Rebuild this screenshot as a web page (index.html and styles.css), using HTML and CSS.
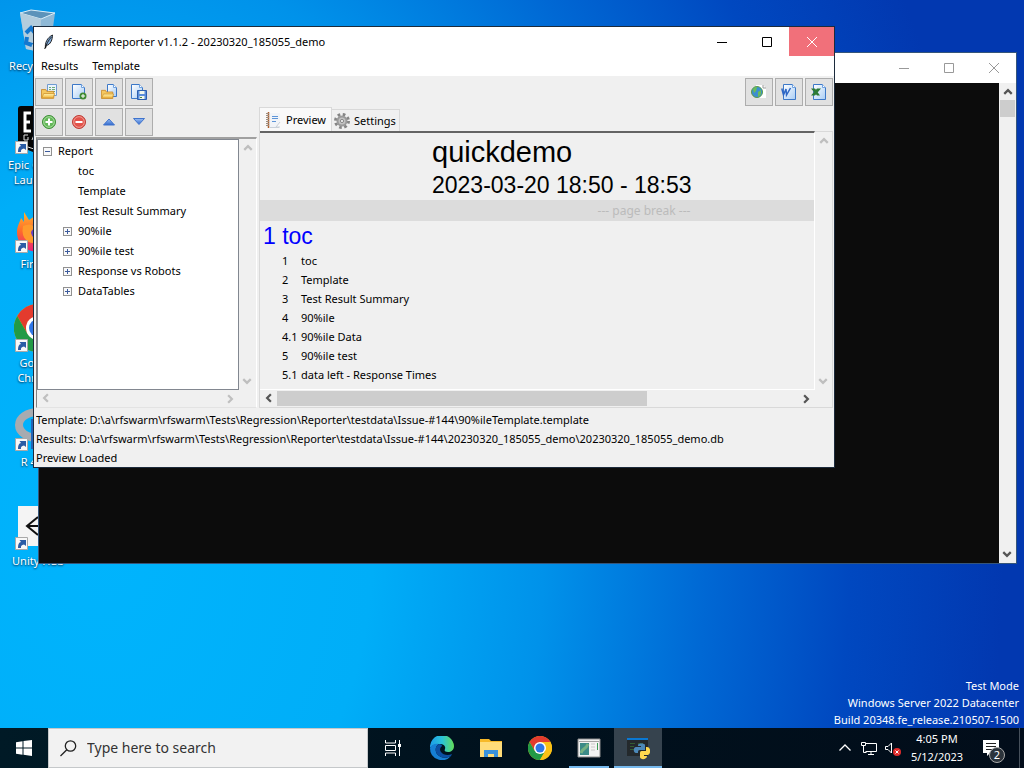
FILE: index.html
```html
<!DOCTYPE html>
<html lang="en">
<head>
<meta charset="utf-8">
<title>rfswarm Reporter</title>
<link rel="stylesheet" href="styles.css">
</head>
<body>
<svg class="defs" aria-hidden="true">
  <defs>
    <linearGradient id="gPage" x1="0" y1="0" x2="1" y2="1"><stop offset="0" stop-color="#fff"/><stop offset="1" stop-color="#a9cdf5"/></linearGradient>
    <linearGradient id="gFolder" x1="0" y1="0" x2="0" y2="1"><stop offset="0" stop-color="#fff3b0"/><stop offset="1" stop-color="#f2b63c"/></linearGradient>
    <linearGradient id="gBlue" x1="0" y1="0" x2="0" y2="1"><stop offset="0" stop-color="#9cc0f5"/><stop offset="1" stop-color="#2f67cc"/></linearGradient>
    <linearGradient id="gEdge" x1="0" y1="0" x2="1" y2="0"><stop offset="0" stop-color="#1c9be8"/><stop offset=".5" stop-color="#2ac3d8"/><stop offset="1" stop-color="#63dd58"/></linearGradient>
    <linearGradient id="gFox" x1="0" y1="0" x2="0" y2="1"><stop offset="0" stop-color="#ffbd2e"/><stop offset=".5" stop-color="#ff6b2b"/><stop offset="1" stop-color="#e8207a"/></linearGradient>
    <symbol id="page" viewBox="0 0 16 16"><path d="M2.500.5h8l3 3v12h-11z" fill="url(#gPage)" stroke="#3c78c8"/><path d="M10.500.5v3h3" fill="#fff" stroke="#6fa1de"/></symbol>
    <symbol id="folder" viewBox="0 0 16 12"><path d="M.5 11.500v-10h5l1 2h8v8z" fill="#f5c860" stroke="#c9892a"/><path d="M1 11l2-5h12.500l-1.500 5z" fill="url(#gFolder)" stroke="#d39a35"/></symbol>
    <symbol id="chrome" viewBox="0 0 48 48"><circle cx="24" cy="24" r="24" fill="#fbc116"/><path d="M3.200 12A24 24 0 0 1 44.800 12H24l-10.400 18z" fill="#e33b2e"/><path d="M3.200 12A24 24 0 0 0 24 48l10.400-18H13.600z" fill="#229a46"/><path d="M44.800 12A24 24 0 0 1 24 48l10.400-18L24 12z" fill="#fbc116"/><circle cx="24" cy="24" r="12" fill="#fff"/><circle cx="24" cy="24" r="9" fill="#2f76e8"/></symbol>
    <symbol id="shortcut" viewBox="0 0 13 13"><path d="M.5.5h12v12H.5z" fill="#f8f8f8" stroke="#a9a9a9"/><path d="M3 11c0-4 1-5.500 3-6L4.500 3H11v6L9 7.500C6.500 8 5.500 9 6 11z" fill="#2b5ca5"/></symbol>
    <symbol id="min" viewBox="0 0 10 10"><path d="M0 5.500h10" stroke="currentColor"/></symbol>
    <symbol id="max" viewBox="0 0 10 10"><path d="M.5.5h9v9h-9z" fill="none" stroke="currentColor"/></symbol>
    <symbol id="close" viewBox="0 0 10 10"><path d="M0 0l10 10M10 0L0 10" stroke="currentColor"/></symbol>
    <symbol id="chev" viewBox="0 0 8 8"><path d="M1 5.500l3-3 3 3" fill="none" stroke="currentColor" stroke-width="1.800"/></symbol>
  </defs>
</svg>
<main class="desktop">
  <nav class="shortcuts" aria-label="Desktop">
    <a href="#" class="shortcut"><span class="pic"><svg viewBox="0 0 48 48"><path d="M6 6l11-3 24 3-5 36-8 3-16-3z" fill="#8fb9d6"/><path d="M6 6l11-3 24 3-14 6z" fill="#5c93ba" stroke="#d9edf8"/><path d="M6 6l21 6-1 33-14-3z" fill="#b3cddd"/><path d="M12 26l5-5 4 5M24 27l1 8-6 3M18 38l-6-2 1-6" fill="none" stroke="#1478cf" stroke-width="4"/></svg></span><span class="label">Recycle Bin</span></a>
    <a href="#" class="shortcut"><span class="pic"><svg viewBox="0 0 48 48"><path d="M7 0h34q3 0 3 3v37L24 48 4 40V3q0-3 3-3z" fill="#050505"/><g fill="none" stroke="#fff" stroke-width="3"><path d="M17 7h-6v18h6M11 16h5M21 26V7h5v9h-5"/></g><path d="M14 29h-4v5h4v-3M18 34l2-5 2 5M11 40l12 4 12-4" fill="none" stroke="#ddd"/></svg><svg class="arrow"><use href="#shortcut"/></svg></span><span class="label">Epic Games Launcher</span></a>
    <a href="#" class="shortcut"><span class="pic"><svg viewBox="0 0 48 48"><path d="M10 7l5 8 6-4 3-6 8 9c8 3 14 9 13 18-1 9-10 15-20 15C11 47 3 38 3 27c0-6 3-10 4-14l3 4z" fill="url(#gFox)"/><circle cx="26" cy="28" r="11" fill="#6c3fc4"/><path d="M9 21q8-4 14 2-6 1-6 5 2 8 11 7-7 6-15 1-6-5-4-15z" fill="#ff9a2c"/></svg><svg class="arrow"><use href="#shortcut"/></svg></span><span class="label">Firefox</span></a>
    <a href="#" class="shortcut"><span class="pic"><svg><use href="#chrome"/></svg><svg class="arrow"><use href="#shortcut"/></svg></span><span class="label">Google Chrome</span></a>
    <a href="#" class="shortcut"><span class="pic"><svg viewBox="0 0 48 48"><ellipse cx="24" cy="22" rx="19" ry="13" fill="none" stroke="#a7abb0" stroke-width="8"/><path d="M20 16h18v10H20M20 16v30M30 26l10 20" fill="none" stroke="#2265b8" stroke-width="6"/></svg><svg class="arrow"><use href="#shortcut"/></svg></span><span class="label">R 4.3.0</span></a>
    <a href="#" class="shortcut"><span class="pic"><svg viewBox="0 0 48 48"><path d="M4 4h40v40H4z" fill="#f4f4f4"/><path d="M24 15L13 24l11 9M13 24h14M24 15l11 9-11 9" fill="none" stroke="#111" stroke-width="2"/></svg><svg class="arrow"><use href="#shortcut"/></svg></span><span class="label">Unity Hub</span></a>
  </nav>

  <div class="watermark">Test Mode<br>Windows Server 2022 Datacenter<br>Build 20348.fe_release.210507-1500</div>

  <section class="window console" aria-label="Console">
    <header class="titlebar">
      <div class="controls"><button aria-label="Minimize"><svg><use href="#min"/></svg></button><button aria-label="Maximize"><svg><use href="#max"/></svg></button><button aria-label="Close"><svg><use href="#close"/></svg></button></div>
    </header>
    <div class="console-body">
      <div class="terminal"></div>
      <div class="scroll vertical"><button aria-label="Scroll up"><svg><use href="#chev"/></svg></button><span class="thumb"></span><button class="down" aria-label="Scroll down"><svg><use href="#chev"/></svg></button></div>
    </div>
  </section>

  <section class="window reporter" aria-label="rfswarm Reporter">
    <header class="titlebar">
      <svg class="feather" viewBox="0 0 16 16"><path d="M4 15C3 9 6 3 12 0c0 5-2 11-7 12z" fill="#7fa9d8" stroke="#111"/><path d="M3 16C5 11 7 6 11 2" stroke="#111" fill="none"/></svg>
      <h1 class="title">rfswarm Reporter v1.1.2 - 20230320_185055_demo</h1>
      <div class="controls"><button aria-label="Minimize"><svg><use href="#min"/></svg></button><button aria-label="Maximize"><svg><use href="#max"/></svg></button><button class="hot" aria-label="Close"><svg><use href="#close"/></svg></button></div>
    </header>
    <nav class="menubar"><button>Results</button><button>Template</button></nav>
    <div class="toolbar">
      <button class="tool" aria-label="Open results"><svg viewBox="0 0 16 16"><path d="M6.500.5h9v11h-9z" fill="#eaf3fd" stroke="#6e9bd1"/><path d="M8 3.500h2M11 3.500h3M8 5.500h2M11 5.500h3M8 7.500h6" stroke="#6fae78"/><use href="#folder" y="4" width="14" height="11"/></svg></button>
      <button class="tool" aria-label="New template"><svg viewBox="0 0 16 16"><path d="M1.500.5h9l3 3v11h-12z" fill="url(#gPage)" stroke="#3c78c8"/><path d="M10.500.5v3h3" fill="#fff" stroke="#6fa1de"/><circle cx="12" cy="12" r="3.500" fill="#3f8a32"/><path d="M12 10v4M10 12h4" stroke="#fff"/></svg></button>
      <button class="tool" aria-label="Open template"><svg viewBox="0 0 16 16"><path d="M6.500.5h6l3 3v9h-9z" fill="url(#gPage)" stroke="#3c78c8"/><path d="M12.500.5v3h3" fill="#fff" stroke="#6fa1de"/><use href="#folder" y="5" width="13" height="10"/></svg></button>
      <button class="tool" aria-label="Save template"><svg viewBox="0 0 16 16"><path d="M.5.5h8l3 3v11H.5z" fill="url(#gPage)" stroke="#3c78c8"/><path d="M8.500.5v3h3" fill="#fff" stroke="#6fa1de"/><path d="M6.500 6.500h9v9h-9z" fill="#5b8edb" stroke="#2c5fae"/><path d="M8.500 7h5v3h-5zM8.500 12h5v3h-5z" fill="#f2f8ec"/><path d="M9 13.500h2" stroke="#4c8a44"/></svg></button>
      <span class="spring"></span>
      <button class="tool" aria-label="Export HTML"><svg viewBox="0 0 16 16"><path d="M5 1h7l3 3v10H5z" fill="#fff"/><path d="M12 1v3h3" fill="none" stroke="#999"/><circle cx="6" cy="8" r="5.500" fill="#3d8fd1" stroke="#5a9a48"/><path d="M2 5q3-3 4-2l-1 4-2 2zM7 8l3-2v4l-3 3z" fill="#6cbf56"/></svg></button>
      <button class="tool" aria-label="Export Word"><svg viewBox="0 0 16 16"><path d="M2.500.5h9l3 3v12h-12z" fill="url(#gPage)" stroke="#3c78c8"/><path d="M11.500.5v3h3" fill="#fff" stroke="#6fa1de"/><path d="M.8 4.500L2.500 11l2.500-6 .5 6L9.500 4" fill="none" stroke="#2f67c5" stroke-width="1.500"/></svg></button>
      <button class="tool" aria-label="Export Excel"><svg viewBox="0 0 16 16"><path d="M2.500.5h9l3 3v12h-12z" fill="url(#gPage)" stroke="#3c78c8"/><path d="M11.500.5v3h3" fill="#fff" stroke="#6fa1de"/><path d="M0 4.500h4l5 7H6zM6 4.500h4l-6 7H0z" fill="#2c7a35"/></svg></button>
    </div>
    <div class="workspace">
      <div class="side">
        <div class="toolbar">
          <button class="tool" aria-label="Add section"><svg viewBox="0 0 16 16"><circle cx="8" cy="8" r="6.500" fill="#65b85a" stroke="#3d8d36"/><circle cx="8" cy="8" r="5.300" fill="none" stroke="#a6dd9d"/><path d="M8 4.500v7M4.500 8h7" stroke="#fff" stroke-width="2"/></svg></button>
          <button class="tool" aria-label="Remove section"><svg viewBox="0 0 16 16"><circle cx="8" cy="8" r="6.500" fill="#e3534b" stroke="#bd3c35"/><circle cx="8" cy="8" r="5.300" fill="none" stroke="#f19d94"/><path d="M4.500 8h7" stroke="#fff" stroke-width="2"/></svg></button>
          <button class="tool" aria-label="Move up"><svg viewBox="0 0 16 16"><path d="M8 5l5.500 6h-11z" fill="url(#gBlue)" stroke="#3f73cc"/></svg></button>
          <button class="tool" aria-label="Move down"><svg viewBox="0 0 16 16"><path d="M8 10.500L2.500 4.500h11z" fill="url(#gBlue)" stroke="#3f73cc"/></svg></button>
        </div>
        <div class="treeframe">
          <ul class="tree">
            <li><button class="toggle open" aria-label="Collapse"></button>Report</li>
            <li class="leaf">toc</li>
            <li class="leaf">Template</li>
            <li class="leaf">Test Result Summary</li>
            <li class="child"><button class="toggle" aria-label="Expand"></button>90%ile</li>
            <li class="child"><button class="toggle" aria-label="Expand"></button>90%ile test</li>
            <li class="child"><button class="toggle" aria-label="Expand"></button>Response vs Robots</li>
            <li class="child"><button class="toggle" aria-label="Expand"></button>DataTables</li>
          </ul>
          <div class="scroll vertical off"><button aria-label="Scroll up"><svg><use href="#chev"/></svg></button><button class="down" aria-label="Scroll down"><svg><use href="#chev"/></svg></button></div>
          <div class="scroll horizontal off"><button class="left" aria-label="Scroll left"><svg><use href="#chev"/></svg></button><button class="right" aria-label="Scroll right"><svg><use href="#chev"/></svg></button></div>
        </div>
      </div>
      <div class="notebook">
        <div class="tabs" role="tablist">
          <button class="tab active" role="tab" aria-selected="true"><svg viewBox="0 0 16 16"><path d="M3 1h11v9l-4 5H3z" fill="#f1f4f8"/><path d="M14 10l-4 5h4M4 15.500h9" fill="none" stroke="#c9d0d8"/><path d="M6 4.500h6M6 6.500h6M6 9.500h4" stroke="#5d95d8"/><path d="M2.500 0v16" stroke="#b1602c" stroke-width="1.500"/><path d="M0 1.500h3M0 3.500h3M0 5.500h3M0 7.500h3M0 9.500h3M0 11.500h3M0 13.500h3" stroke="#9d8d80"/></svg>Preview</button>
          <button class="tab" role="tab" aria-selected="false"><svg viewBox="0 0 16 16"><circle cx="8" cy="8" r="6.500" fill="none" stroke="#858585" stroke-width="3" stroke-dasharray="2.600 2.500"/><circle cx="8" cy="8" r="4.500" fill="#c2c2c2" stroke="#9a9a9a" stroke-width="2"/><circle cx="8" cy="8" r="1.600" fill="#eee" stroke="#888"/></svg>Settings</button>
        </div>
        <div class="pane">
          <div class="viewport">
            <article class="report">
              <h2 class="name">quickdemo</h2>
              <p class="when">2023-03-20 18:50 - 18:53</p>
              <p class="break">--- page break ---</p>
              <h3 class="heading">1 toc</h3>
              <table class="toc">
                <tr><td>1</td><td>toc</td></tr>
                <tr><td>2</td><td>Template</td></tr>
                <tr><td>3</td><td>Test Result Summary</td></tr>
                <tr><td>4</td><td>90%ile</td></tr>
                <tr><td>4.1</td><td>90%ile Data</td></tr>
                <tr><td>5</td><td>90%ile test</td></tr>
                <tr><td>5.1</td><td>data left - Response Times</td></tr>
                <tr><td>5.2</td><td>data right - 90%ile</td></tr>
              </table>
            </article>
          </div>
          <div class="scroll vertical off"><button aria-label="Scroll up"><svg><use href="#chev"/></svg></button><button class="down" aria-label="Scroll down"><svg><use href="#chev"/></svg></button></div>
          <div class="scroll horizontal"><button class="left" aria-label="Scroll left"><svg><use href="#chev"/></svg></button><span class="track"><span class="thumb"></span></span><button class="right" aria-label="Scroll right"><svg><use href="#chev"/></svg></button></div>
        </div>
      </div>
    </div>
    <footer class="status">
      <p>Template: D:\a\rfswarm\rfswarm\Tests\Regression\Reporter\testdata\Issue-#144\90%ileTemplate.template</p>
      <p>Results: D:\a\rfswarm\rfswarm\Tests\Regression\Reporter\testdata\Issue-#144\20230320_185055_demo\20230320_185055_demo.db</p>
      <p>Preview Loaded</p>
    </footer>
  </section>
</main>

<footer class="taskbar">
  <button class="start" aria-label="Start"><svg viewBox="0 0 16 16"><path d="M0 2.200L6.500 1.300v6.200H0zM7.500 1.100L16 0v7.500H7.500zM0 8.500h6.500v6.200L0 13.800zM7.500 8.500H16V16l-8.500-1.200z" fill="#fff"/></svg></button>
  <label class="search"><svg viewBox="0 0 17 17"><circle cx="10.500" cy="6" r="5.200" fill="none" stroke="#222" stroke-width="1.300"/><path d="M6.800 9.700L.5 16" stroke="#222" stroke-width="1.300"/></svg><input type="text" placeholder="Type here to search" aria-label="Search"></label>
  <div class="apps">
    <button aria-label="Task View"><svg class="small" viewBox="0 0 18 18"><path d="M1.500 1v3h10V1M1.500 17v-3h10v3M1.500 6.500h10v5h-10zM15.500 1v16" fill="none" stroke="#fff"/><path d="M14 5h3v3h-3z" fill="#fff"/></svg></button>
    <button aria-label="Edge"><svg viewBox="0 0 24 24"><path d="M0 12A12 12 0 0 1 24 10c0 4-3 6-6 6s-4-1-3-3c1-3-2-5-5-5C5 8 1 10 0 12z" fill="url(#gEdge)"/><path d="M0 12c1-3 5-5 9-4-4 2-4 7-2 10 3 4 9 5 14 2A12 12 0 0 1 0 12z" fill="#167fd4"/><path d="M9 8c-4 2-4 7-2 10 3 4 9 5 14 2l1-2c-4 2-9 1-11-2-2-3 0-5 1-6 0-1-1-2-3-2z" fill="#0b4fa3"/></svg></button>
    <button aria-label="File Explorer"><svg viewBox="0 0 24 24"><path d="M1 3h9l2 2h11v16H1z" fill="#f7b928"/><path d="M1 6h22v15H1z" fill="#ffdc79"/><path d="M5 21v-7h14v7h-4v-3H9v3z" fill="#3a92dc"/></svg></button>
    <button aria-label="Chrome"><svg><use href="#chrome"/></svg></button>
    <button class="running" aria-label="Console"><svg viewBox="0 0 24 24"><path d="M1 3h22v18H1z" fill="#f3f3f3" stroke="#8d8d8d"/><path d="M2 5.500h20" stroke="#a5a5a5"/><path d="M3 7h9v12H3z" fill="#3c8b88"/><path d="M4 17c2-6 4-2 7-9" fill="none" stroke="#75b183" stroke-width="3"/><path d="M14 8h4M14 11h4M14 14h4" stroke="#c9c9c9"/><path d="M20.500 7v7" stroke="#3c9c58"/></svg></button>
    <button class="running current" aria-label="Python"><svg viewBox="0 0 24 24"><path d="M1 2h21v18H1z" fill="#24292c"/><path d="M1 2h21v2H1z" fill="#0a78d3"/><path d="M4 7.500h5M4 10.500h4M4 13.500h4M12 7.500h5" stroke="#345d32"/><path d="M12 9c0-2 7-2 7 0v5h-5c-2 0-2 1-2 3h-2c-3 0-3-6 0-6h5v-1h-3z" fill="#4c88b8"/><path d="M14 21v-4c0-2 1-2 3-2h3v-4h1c4 0 4 7 1 8h-4v1h3c0 4-7 4-7 1z" fill="#ffd94f"/></svg></button>
  </div>
  <div class="tray">
    <button aria-label="Show hidden icons"><svg viewBox="0 0 16 16"><path d="M2.500 10.500L8 5l5.500 5.500" fill="none" stroke="#fff" stroke-width="1.300"/></svg></button>
    <button aria-label="Network"><svg viewBox="0 0 16 16"><path d="M4.500 3.500h11v8H4.500M10 12v3M7 14.500h6M.5 2.500h4v3h-4zM2.500 6v6.500h3" fill="none" stroke="#fff"/></svg></button>
    <button aria-label="Volume muted"><svg viewBox="0 0 16 16"><path d="M.5 6.500H3L6.500 3v10L3 9.500H.5z" fill="none" stroke="#fff"/><circle cx="12" cy="12" r="4" fill="#e02b2b"/><path d="M10.500 10.500l3 3M13.500 10.500l-3 3" stroke="#fff"/></svg></button>
    <time class="clock">4:05 PM<br>5/12/2023</time>
    <button class="notes" aria-label="Notifications"><svg viewBox="0 0 16 16"><path d="M0 0h16v13H7l-3 3v-3H0z" fill="#fff"/><path d="M3 3.500h10M3 6.500h10M3 9.500h6" stroke="#222"/></svg><span class="badge">2</span></button>
  </div>
</footer>
</body>
</html>
```
FILE: styles.css
```css
* { box-sizing: border-box; }
body {
  margin: 0;
  height: 100vh;
  display: flex;
  flex-direction: column;
  overflow: hidden;
  font: 11px/16px "Noto Sans", "Open Sans", sans-serif;
  color: #000;
}
h1, h2, h3, p, ul { margin: 0; padding: 0; font-weight: 400; }
button { margin: 0; padding: 0; border: 0; background: none; font: inherit; color: inherit; display: flex; align-items: center; justify-content: center; }
a { color: inherit; text-decoration: none; }
.defs { position: absolute; width: 0; height: 0; }

.desktop {
  flex: 1;
  min-height: 0;
  position: relative;
  overflow: hidden;
  background: radial-gradient(ellipse 88% 165% at 10% 75%, #00b4fd 0%, #00aef8 30%, #0092ea 49%, #0068d4 67%, #0048c0 83%, #0238b0 100%);
}
.shortcuts { width: 76px; padding-top: 7px; display: flex; flex-direction: column; }
.shortcut { height: 99px; display: flex; flex-direction: column; align-items: center; gap: 3px; color: #fff; text-align: center; line-height: 15px; text-shadow: 0 1px 2px #024; }
.pic { position: relative; width: 48px; height: 48px; flex: none; }
.pic svg { width: 48px; height: 48px; display: block; }
.pic .arrow { position: absolute; left: 1px; bottom: 0; width: 13px; height: 13px; }
.watermark { position: absolute; right: 5px; bottom: 0; color: #fff; text-align: right; line-height: 17px; }

.window { position: absolute; display: flex; flex-direction: column; border: 1px solid #1c2b3c; }
.console { left: 38px; right: 7px; top: 52px; bottom: 164px; border-color: #35557a; }
.reporter { left: 33px; right: 189px; top: 26px; bottom: 260px; background: #f0f0f0; }
.titlebar { display: flex; align-items: center; background: #fff; height: 29px; flex: none; }
.console .titlebar { height: 30px; }
.feather { width: 14px; height: 16px; margin: 0 7px 0 8px; }
.title { font-size: 11px; flex: 1; }
.controls { display: flex; height: 100%; margin-left: auto; }
.controls button { width: 45px; }
.controls svg { width: 10px; height: 10px; }
.hot { background: #f1707a; color: #fff; }
.console .controls { color: #999; }
.console-body { flex: 1; display: flex; min-height: 0; }
.terminal { flex: 1; background: #0c0c0c; }

.scroll { background: #f0f0f0; display: flex; color: #555; flex: none; }
.scroll button { width: 17px; height: 17px; flex: none; }
.scroll svg { width: 10px; height: 10px; }
.vertical { width: 17px; flex-direction: column; }
.vertical .thumb { height: 17px; margin: 0 1px; background: #cdcdcd; }
.down { margin-top: auto; transform: rotate(180deg); }
.left { transform: rotate(-90deg); }
.right { transform: rotate(90deg); margin-left: auto; }
.off { color: #bfbfbf; }

.menubar { display: flex; gap: 14px; padding: 0 7px; height: 20px; background: #fff; flex: none; }
.toolbar { display: flex; gap: 2px; padding: 2px 1px 0; flex: none; height: 30px; }
.reporter > .toolbar { height: 31px; }
.spring { flex: 1; }
.tool { width: 28px; height: 28px; border: 1px solid #adadad; background: #e1e1e1; }
.tool svg { width: 16px; height: 16px; }

.workspace { flex: 1; display: flex; gap: 2px; min-height: 0; padding: 0 1px 0 2px; }
.side { width: 221px; display: flex; flex-direction: column; }
.side .toolbar { padding: 1px 0 0; margin-left: -1px; }
.treeframe {
  flex: 1; min-height: 0;
  display: grid; grid-template: 1fr 17px / 1fr 17px;
  border: solid; border-width: 2px 1px 1px; border-color: #a0a0a0 #fff #e3e3e3 #828282;
}
.tree { list-style: none; background: #fff; border: 1px solid #828790; padding: 1px 5px; line-height: 20px; overflow: hidden; }
.tree li { display: flex; align-items: center; gap: 6px; height: 20px; }
.tree .child { padding-left: 20px; }
.tree .leaf { padding-left: 35px; }
.toggle { width: 9px; height: 9px; border: 1px solid #919191; background: linear-gradient(#3c5a9c, #3c5a9c) center / 5px 1px no-repeat, linear-gradient(#3c5a9c, #3c5a9c) center / 1px 5px no-repeat, #f8f8f8; flex: none; }
.toggle.open { background: linear-gradient(#3c5a9c, #3c5a9c) center / 5px 1px no-repeat, #f8f8f8; }

.notebook { flex: 1; min-width: 0; display: flex; flex-direction: column; }
.tabs { display: flex; align-items: flex-end; height: 24px; flex: none; }
.tab { height: 22px; padding: 0 3px 0 2px; gap: 4px; border: 1px solid #d9d9d9; border-width: 1px 1px 0 0; }
.tab.active { height: 24px; padding: 0 5px 0 6px; background: #f9f9f9; border-left-width: 1px; }
.tab svg { width: 16px; height: 16px; }
.pane { flex: 1; min-height: 0; display: grid; grid-template: minmax(0, 1fr) 17px / minmax(0, 1fr) 17px; border: 1px solid #d9d9d9; border-top: 0; }
.viewport { overflow: hidden; border-top: 2px solid #646464; border-bottom: 1px solid #fff; border-right: 1px solid #fff; }
.pane .vertical { border-top: 1px solid #d9d9d9; }
.track { flex: 1; }
.track .thumb { display: block; width: 71%; height: 15px; margin-top: 1px; background: #cdcdcd; }
.report { width: 768px; }
.name, .when, .heading { font-family: "Liberation Sans", Arial, sans-serif; }
.name { font-size: 29px; line-height: 38px; padding-left: 172px; }
.when { font-size: 23px; line-height: 29px; padding-left: 172px; }
.break { background: #dcdcdc; color: #bbb; text-align: center; font-size: 12px; line-height: 21px; }
.heading { font-size: 23px; line-height: 30px; padding-left: 3px; color: #00f; }
.toc { border-collapse: collapse; margin-left: 22px; }
.toc td { padding: 0; height: 19px; line-height: 19px; }
.toc td:first-child { width: 19px; }
.status { padding: 2px 2px 0; line-height: 19px; flex: none; }
.status p { white-space: nowrap; overflow: hidden; }

.taskbar { height: 40px; flex: none; display: flex; color: #fff; background: linear-gradient(90deg, #001a26, #00111d 50%, #020d1a); }
.start { width: 48px; }
.start svg { width: 16px; height: 16px; }
.search { width: 320px; display: flex; align-items: center; gap: 10px; padding: 0 11px; background: #f2f2f2; border: 1px solid #c5c8ca; }
.search svg { width: 17px; height: 17px; flex: none; }
.search input { flex: 1; min-width: 0; border: 0; padding: 0; background: none; font: 14px/20px "Noto Sans", "Open Sans", sans-serif; color: #333; outline: 0; }
.search input::placeholder { color: #333; opacity: 1; }
.apps { display: flex; gap: 1px; }
.apps button { width: 48px; }
.apps button:first-child { width: 49px; }
.apps svg { width: 24px; height: 24px; }
.apps .small { width: 18px; height: 18px; }
.running { background: linear-gradient(#76b9ed, #76b9ed) bottom / 40px 2px no-repeat; }
.current { background: linear-gradient(#76b9ed, #76b9ed) bottom / 100% 2px no-repeat, #36434e; }
.tray { margin-left: auto; display: flex; align-items: center; border-right: 1px solid #46505b; margin-right: 4px; }
.tray button { width: 24px; height: 40px; }
.tray svg { width: 16px; height: 16px; }
.clock { width: 64px; text-align: center; line-height: 18px; }
.tray .notes { width: 50px; padding-right: 6px; position: relative; }
.badge { position: absolute; left: 20px; top: 19px; width: 16px; height: 16px; border-radius: 8px; background: #2b333b; border: 1px solid #aaa; line-height: 14px; }
```
